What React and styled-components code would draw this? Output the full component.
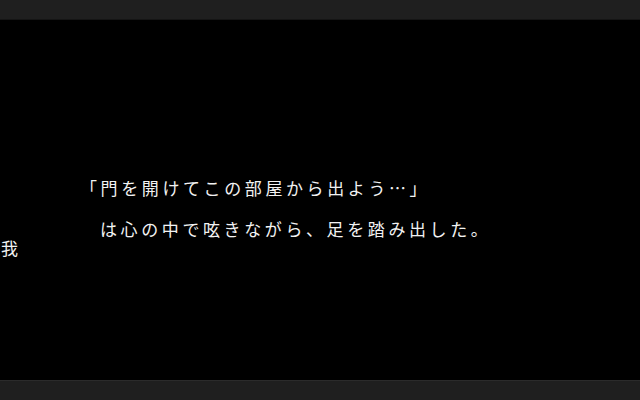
import styled, { createGlobalStyle } from 'styled-components';

const GlobalStyle = createGlobalStyle`
  html, body {
    margin: 0;
    padding: 0;
    background: #000;
  }
`;

const Screen = styled.div`
  width: 640px;
  height: 400px;
  display: flex;
  flex-direction: column;
  background: #000;
  overflow: hidden;
  font-family: "Noto Sans CJK JP", "Noto Sans CJK SC", sans-serif;
`;

const Bar = styled.div`
  height: 20px;
  flex: none;
  background: #1f1f1f;
  box-sizing: border-box;
  border-${(props) => (props.bottom ? 'top' : 'bottom')}: 1px solid
    ${(props) => (props.bottom ? '#2b2b2b' : '#151515')};
`;

const Stage = styled.div`
  flex: 1;
  position: relative;
  padding-top: 158px;
  box-sizing: border-box;
`;

const Line = styled.div`
  margin-left: ${(props) => props.indent}px;
  margin-bottom: 21px;
  font-size: 17px;
  line-height: 20px;
  letter-spacing: 3.6px;
  color: #f2f2f2;
  white-space: nowrap;
`;

const Name = styled.div`
  position: absolute;
  left: 1px;
  top: 218px;
  font-size: 17px;
  line-height: 20px;
  color: #f2f2f2;
`;

const App = () => (
  <>
    <GlobalStyle />
    <Screen>
      <Bar />
      <Stage>
        <Line indent={80}>「門を開けてこの部屋から出よう…」</Line>
        <Line indent={100}>は心の中で呟きながら、足を踏み出した。</Line>
        <Name>我</Name>
      </Stage>
      <Bar bottom />
    </Screen>
  </>
);

export default App;
